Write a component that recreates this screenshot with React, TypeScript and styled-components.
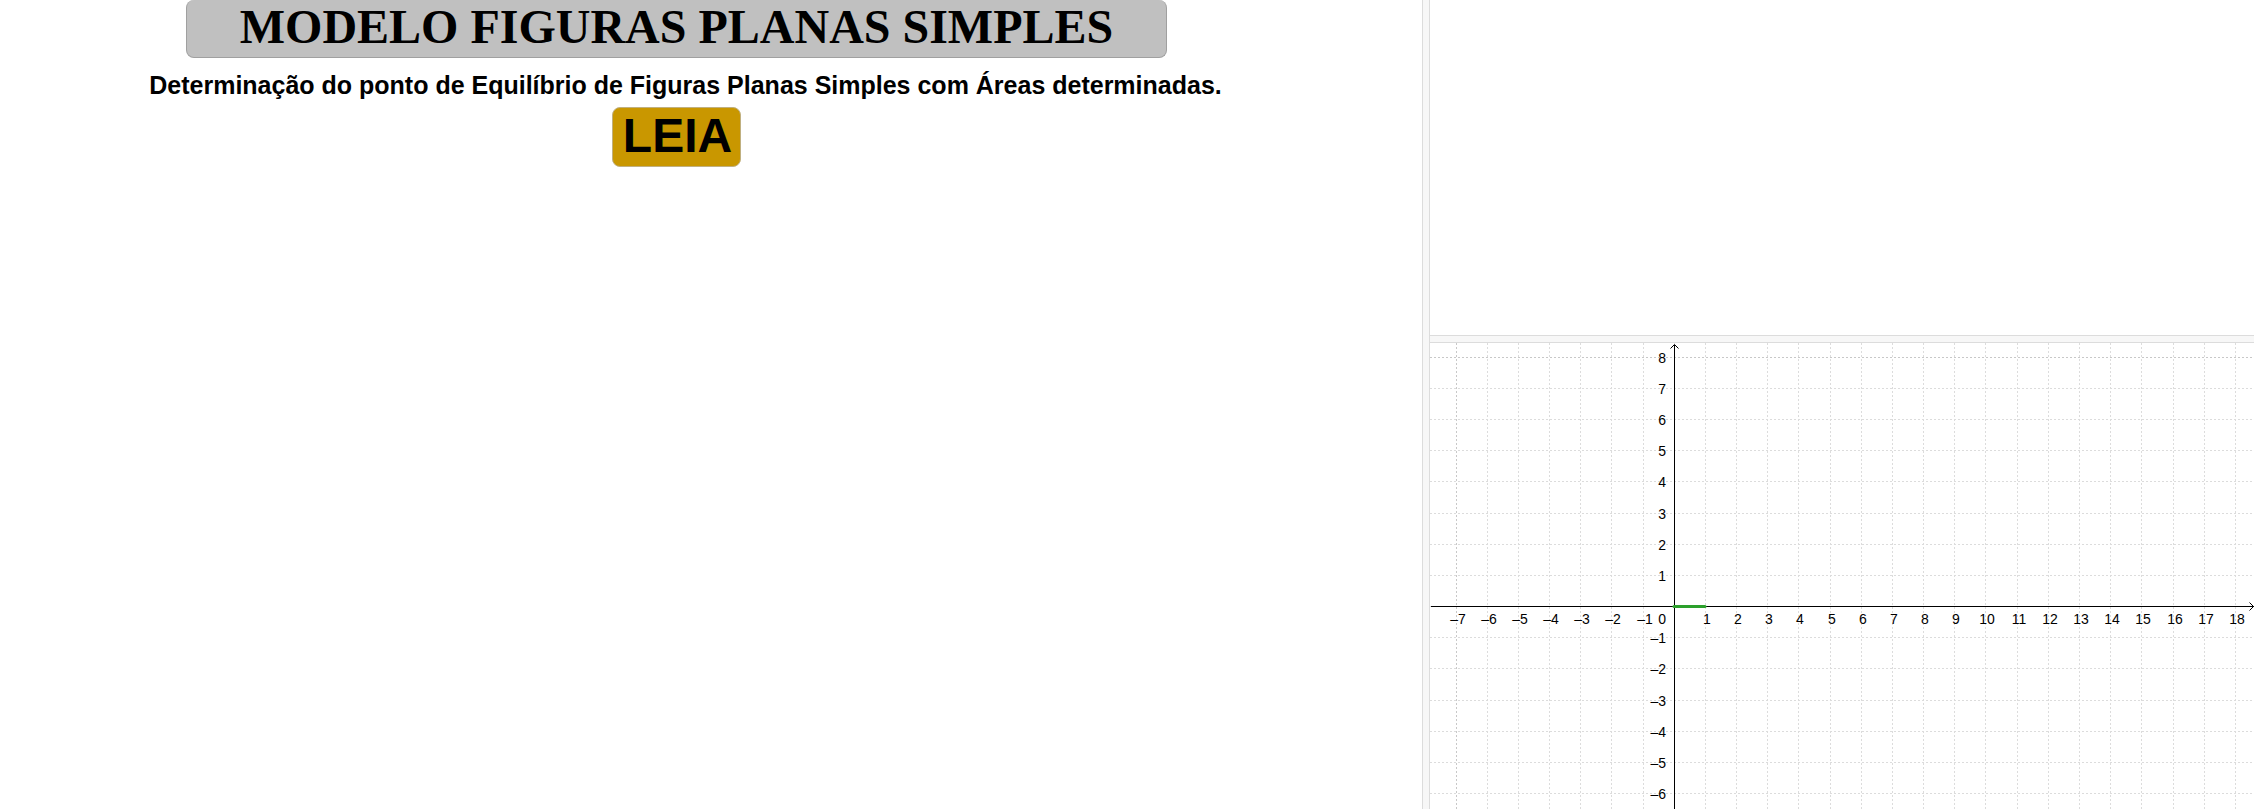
import React from "react";
import styled, { createGlobalStyle } from "styled-components";

const GlobalStyle = createGlobalStyle`
  * { box-sizing: border-box; }
  body { margin: 0; background: #fff; font-family: "Liberation Sans", Arial, sans-serif; }
`;

const Page = styled.main`
  display: grid;
  grid-template-columns: minmax(0, 1422fr) 8px minmax(0, 824fr);
  min-height: 100vh;
  padding: 0 2px 3px 0;
`;

const TextPane = styled.section`
  display: flex;
  flex-direction: column;
  align-items: center;
  padding-right: 69px;
`;

const SidePane = styled.div`
  display: flex;
  flex-direction: column;
`;

const Divider = styled.div<{ $vertical?: boolean }>`
  flex: 0 0 8px;
  background: #f7f7f7;
  border: solid #dcdcdc;
  border-width: ${(p) => (p.$vertical ? "0 1px" : "1px 0")};
`;

const AppletButton = styled.button<{ $tone: string; $edge: string }>`
  display: block;
  background: ${(p) => p.$tone};
  border: 1px solid ${(p) => p.$edge};
  border-radius: 8px;
  color: #000;
  font-size: 48px;
  font-weight: bold;
  line-height: 54px;
  white-space: nowrap;
  cursor: pointer;
`;

const TitleButton = styled(AppletButton)`
  padding: 0 53px 3px;
  border-top: 0;
  font-family: "Liberation Serif", "Times New Roman", serif;
`;

const ReadButton = styled(AppletButton)`
  padding: 1px 8px 3px 10px;
  font-family: "Liberation Sans", Arial, sans-serif;
`;

const Subtitle = styled.p`
  margin: 12px 0 7px;
  padding-left: 18px;
  color: #000;
  font-size: 25px;
  font-weight: bold;
  line-height: 30px;
  white-space: nowrap;
`;

const EmptyView = styled.section`
  flex: 0 0 335px;
`;

const PlotView = styled.section`
  flex: 1 0 466px;
  display: flex;
`;

const Plot = styled.svg`
  display: block;
  flex: 1;
  min-width: 0;
  font-family: "Liberation Sans", Arial, sans-serif;
  font-size: 14px;
`;

/* Plot geometry: pixels per unit and the origin inside the view. */
const UNIT = 31.17;
const ORIGIN_X = 244.29;
const ORIGIN_Y = 263.55;

const range = (from: number, to: number) =>
  Array.from({ length: to - from + 1 }, (_, i) => from + i);

const toX = (n: number) => Math.floor(ORIGIN_X + n * UNIT);
const toY = (n: number) => Math.floor(ORIGIN_Y - n * UNIT);
const label = (n: number) => (n < 0 ? `–${-n}` : `${n}`);

const COLUMNS = range(-7, 18);
const ROWS = range(-6, 8);
const AXIS_X = toX(0);
const AXIS_Y = toY(0);

/* The outermost column and row are drawn a shade darker. */
const tone = (outer: boolean) => (outer ? "#c8c8c8" : "#dcdcdc");

function CoordinatePlot() {
  return (
    <Plot role="img" aria-label="Plano cartesiano">
      <g shapeRendering="crispEdges" strokeDasharray="2 2">
        {COLUMNS.map((n) => (
          <line key={n} x1={toX(n) + 0.5} x2={toX(n) + 0.5} y1="0" y2="100%" stroke={tone(n === -7)} />
        ))}
        {ROWS.map((n) => (
          <line key={n} x1="0" x2="100%" y1={toY(n) + 0.5} y2={toY(n) + 0.5} stroke={tone(n === 8)} />
        ))}
      </g>
      <g fill="none" stroke="#000">
        <line x1="1" x2="100%" y1={AXIS_Y + 0.5} y2={AXIS_Y + 0.5} />
        <line x1={AXIS_X + 0.5} x2={AXIS_X + 0.5} y1="2" y2="100%" />
        <path d={`M${AXIS_X - 3.5} 5.5l4 -4l4 4`} />
        <svg x="100%" y={AXIS_Y} overflow="visible">
          <path d="M-4.5 -3.5l4 4l-4 4" />
        </svg>
      </g>
      <line
        x1={AXIS_X}
        x2={AXIS_X + 31}
        y1={AXIS_Y + 0.5}
        y2={AXIS_Y + 0.5}
        stroke="#2ca02c"
        strokeWidth="3"
        strokeLinecap="round"
      />
      <g textAnchor="middle">
        {COLUMNS.filter((n) => n !== 0).map((n) => (
          <text key={n} x={toX(n) + 2} y={AXIS_Y + 18}>{label(n)}</text>
        ))}
      </g>
      <g textAnchor="end">
        {ROWS.map((n) => (
          <text key={n} x={AXIS_X - 8} y={n === 0 ? AXIS_Y + 18 : toY(n) + 6}>{label(n)}</text>
        ))}
      </g>
    </Plot>
  );
}

export default function App() {
  return (
    <>
      <GlobalStyle />
      <Page>
        <TextPane>
          <TitleButton type="button" $tone="#c0c0c0" $edge="#a0a0a0">
            MODELO FIGURAS PLANAS SIMPLES
          </TitleButton>
          <Subtitle>
            Determinação do ponto de Equilíbrio de Figuras Planas Simples com Áreas determinadas.
          </Subtitle>
          <ReadButton type="button" $tone="#c99700" $edge="#c0b080">
            LEIA
          </ReadButton>
        </TextPane>
        <Divider $vertical />
        <SidePane>
          <EmptyView />
          <Divider />
          <PlotView>
            <CoordinatePlot />
          </PlotView>
        </SidePane>
      </Page>
    </>
  );
}
